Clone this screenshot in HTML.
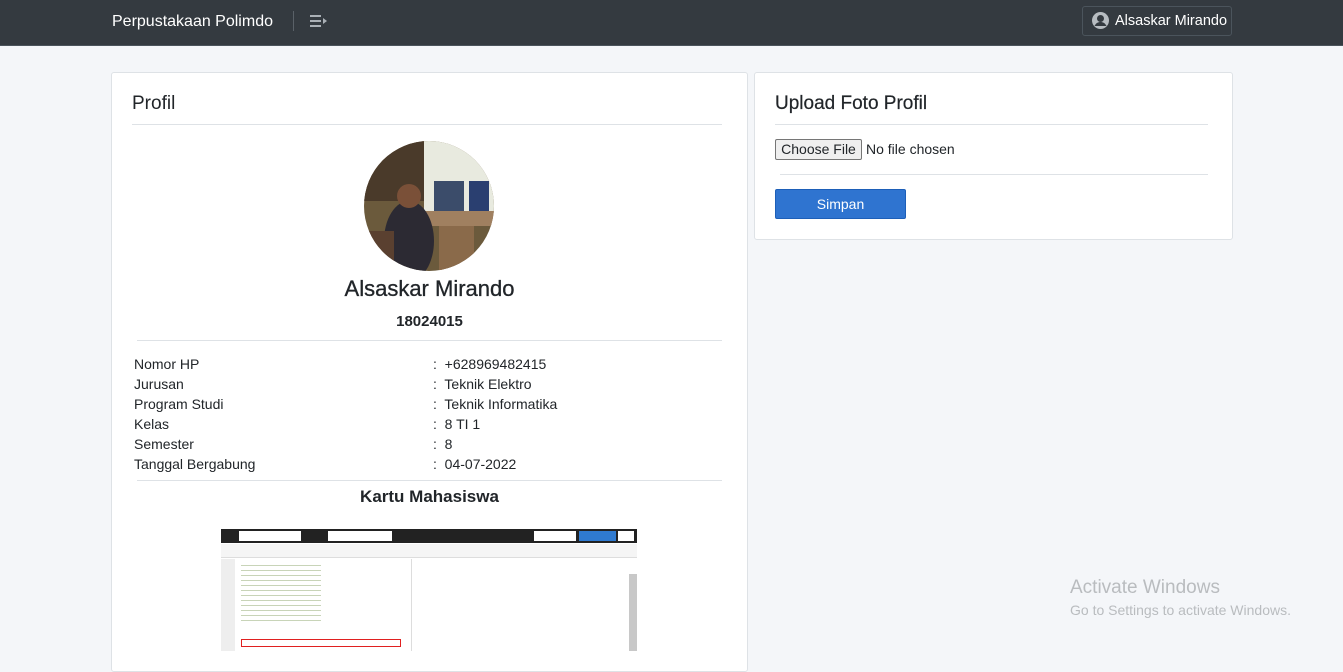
<!DOCTYPE html>
<html><head><style>
*{box-sizing:border-box;margin:0;padding:0}
body{width:1343px;height:651px;overflow:hidden;background:#f4f6f9;font-family:"Liberation Sans",sans-serif;color:#212529;position:relative;font-size:14px}
.nav{position:absolute;left:0;top:0;width:1343px;height:46px;background:#343a40;border-bottom:1px solid #4b545c}
.abs{position:absolute}
.card{position:absolute;background:#fff;border:1px solid #dee2e6;border-radius:3px}
hr{position:absolute;border:0;border-top:1px solid #dee2e6;height:0}
.row{position:absolute;left:134px;font-size:14px;color:#212529}
</style></head><body>
<div class="nav">
<div class="abs" style="left:112px;top:13px;color:#fff;font-size:16px">Perpustakaan Polimdo</div>
<div class="abs" style="left:293px;top:11px;width:1px;height:20px;background:#5a6168"></div>
<svg class="abs" style="left:310px;top:14px" width="18" height="14"><g fill="#aab0b6"><rect x="0" y="1" width="11" height="2"/><rect x="0" y="6" width="11" height="2"/><rect x="0" y="11" width="11" height="2"/><path d="M13 4l4 3-4 3z"/></g></svg>
<div class="abs" style="left:1082px;top:6px;width:150px;height:30px;border:1px solid #4b545c;border-radius:3px"></div>
<svg class="abs" style="left:1092px;top:12px" width="17" height="17"><circle cx="8.5" cy="8.5" r="8.5" fill="#b7bcc1"/><circle cx="8.5" cy="6.5" r="3.5" fill="#343a40"/><path d="M2.5 14c1.5-3 3.5-4 6-4s4.5 1 6 4" fill="#343a40"/></svg>
<div class="abs" style="left:1115px;top:13px;color:#fff;font-size:14.5px">Alsaskar Mirando</div>
</div>

<div class="card" style="left:111px;top:72px;width:637px;height:600px"></div>
<div class="abs" style="left:132px;top:93px;font-size:19px;font-weight:500">Profil</div>
<hr style="left:132px;top:124px;width:590px">
<svg class="abs" style="left:364px;top:141px" width="130" height="130"><defs><clipPath id="c"><circle cx="65" cy="65" r="65"/></clipPath></defs><g clip-path="url(#c)"><rect width="130" height="130" fill="#6b5a3c"/><rect x="60" y="0" width="70" height="70" fill="#e8eadf"/><rect x="0" y="0" width="60" height="60" fill="#4a3a2a"/><rect x="70" y="40" width="30" height="30" fill="#3b4c6a"/><rect x="105" y="40" width="20" height="35" fill="#2a3f70"/><rect x="60" y="70" width="70" height="15" fill="#a08060"/><rect x="75" y="85" width="35" height="45" fill="#8a6a4a"/><ellipse cx="45" cy="100" rx="25" ry="40" fill="#2c2a33"/><circle cx="45" cy="55" r="12" fill="#7a5038"/><rect x="0" y="90" width="30" height="40" fill="#5a4030"/></g></svg>
<div class="abs" style="left:111px;width:637px;top:276px;text-align:center;font-size:22px;-webkit-text-stroke:0.3px #212529">Alsaskar Mirando</div>
<div class="abs" style="left:111px;width:637px;top:313px;text-align:center;font-size:15px;font-weight:bold">18024015</div>
<hr style="left:137px;top:340px;width:585px">
<div class="row" style="top:356px">Nomor HP</div><div class="row" style="top:356px;left:433px">:&nbsp; +628969482415</div>
<div class="row" style="top:376px">Jurusan</div><div class="row" style="top:376px;left:433px">:&nbsp; Teknik Elektro</div>
<div class="row" style="top:396px">Program Studi</div><div class="row" style="top:396px;left:433px">:&nbsp; Teknik Informatika</div>
<div class="row" style="top:416px">Kelas</div><div class="row" style="top:416px;left:433px">:&nbsp; 8 TI 1</div>
<div class="row" style="top:436px">Semester</div><div class="row" style="top:436px;left:433px">:&nbsp; 8</div>
<div class="row" style="top:456px">Tanggal Bergabung</div><div class="row" style="top:456px;left:433px">:&nbsp; 04-07-2022</div>
<hr style="left:137px;top:480px;width:585px">
<div class="abs" style="left:111px;width:637px;top:487px;text-align:center;font-size:17px;font-weight:bold">Kartu Mahasiswa</div>
<div class="abs" style="left:221px;top:529px;width:416px;height:122px;background:#fff;overflow:hidden">
<div class="abs" style="left:0;top:0;width:416px;height:14px;background:#222"></div>
<div class="abs" style="left:18px;top:2px;width:62px;height:10px;background:#fff"></div>
<div class="abs" style="left:107px;top:2px;width:64px;height:10px;background:#fff"></div>
<div class="abs" style="left:313px;top:2px;width:42px;height:10px;background:#fff"></div>
<div class="abs" style="left:358px;top:2px;width:37px;height:10px;background:#2f7ad0"></div>
<div class="abs" style="left:397px;top:2px;width:16px;height:10px;background:#fff"></div>
<div class="abs" style="left:0;top:15px;width:416px;height:14px;background:#f5f5f5;border-bottom:1px solid #ddd"></div>
<div class="abs" style="left:0;top:30px;width:14px;height:92px;background:#eee"></div>
<div class="abs" style="left:190px;top:30px;width:1px;height:92px;background:#ddd"></div>
<div class="abs" style="left:408px;top:45px;width:8px;height:77px;background:#c8c8c8"></div>
<div class="abs" style="left:20px;top:34px;width:80px;height:60px;background:repeating-linear-gradient(#fff 0 2px,#c8d4b8 2px 3px,#fff 3px 5px)"></div>
<div class="abs" style="left:20px;top:110px;width:160px;height:8px;border:1px solid #e02020"></div>
</div>

<div class="card" style="left:754px;top:72px;width:479px;height:168px"></div>
<div class="abs" style="left:775px;top:93px;font-size:19px;-webkit-text-stroke:0.2px #212529">Upload Foto Profil</div>
<hr style="left:775px;top:124px;width:433px">
<div class="abs" style="left:775px;top:139px;width:87px;height:21px;border:1px solid #767676;border-radius:2px;background:#efefef;font-size:14px;text-align:center;line-height:19px">Choose File</div>
<div class="abs" style="left:866px;top:141px;font-size:14px">No file chosen</div>
<hr style="left:780px;top:174px;width:428px">
<div class="abs" style="left:775px;top:189px;width:131px;height:30px;background:#2f74d0;border:1px solid #1d5fb8;border-radius:2px;color:#fff;text-align:center;line-height:28px;font-size:14px">Simpan</div>

<div class="abs" style="left:1070px;top:577px;font-size:19px;color:#b9bcbf">Activate Windows</div>
<div class="abs" style="left:1070px;top:602px;font-size:14px;color:#b9bcbf">Go to Settings to activate Windows.</div>
</body></html>
